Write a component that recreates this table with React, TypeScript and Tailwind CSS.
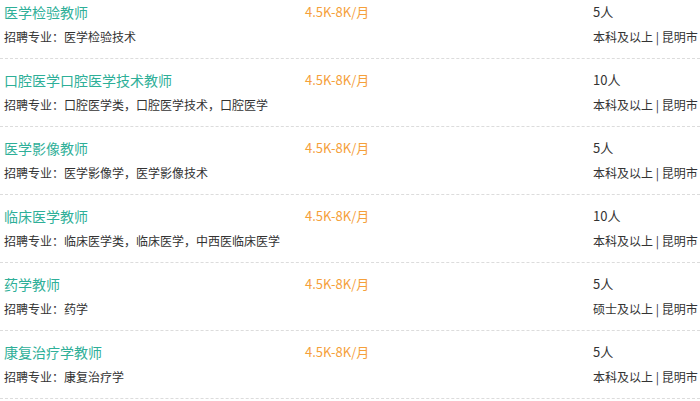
const jobs = [
  { title: "医学检验教师", major: "医学检验技术", count: "5人", edu: "本科及以上" },
  { title: "口腔医学口腔医学技术教师", major: "口腔医学类，口腔医学技术，口腔医学", count: "10人", edu: "本科及以上" },
  { title: "医学影像教师", major: "医学影像学，医学影像技术", count: "5人", edu: "本科及以上" },
  { title: "临床医学教师", major: "临床医学类，临床医学，中西医临床医学", count: "10人", edu: "本科及以上" },
  { title: "药学教师", major: "药学", count: "5人", edu: "硕士及以上" },
  { title: "康复治疗学教师", major: "康复治疗学", count: "5人", edu: "本科及以上" },
];

export default function App() {
  return (
    <div
      className="w-[700px] h-[401px] overflow-hidden bg-white"
      style={{ fontFamily: '"Microsoft YaHei", "Noto Sans CJK SC", sans-serif' }}
    >
      <ul className="-mt-[9px]">
        {jobs.map((job) => (
          <li
            key={job.title}
            className="flex border-b border-dashed border-[#dcdcdc] pl-[4px] pt-[11px] pb-[11px]"
          >
            <div className="w-[301px] flex flex-col gap-[5px]">
              <a className="text-[14px] leading-[20px] text-[#2eaf98] cursor-pointer">{job.title}</a>
              <p className="text-[12px] leading-[20px] text-[#333]">招聘专业：{job.major}</p>
            </div>
            <div className="w-[288px] text-[13px] leading-[20px] text-[#f5a03a]">4.5K-8K/月</div>
            <div className="flex flex-col gap-[5px] whitespace-nowrap">
              <span className="text-[13px] leading-[20px] text-[#333]">{job.count}</span>
              <span className="text-[12px] leading-[20px] text-[#333]">{job.edu} | 昆明市</span>
            </div>
          </li>
        ))}
      </ul>
    </div>
  );
}
